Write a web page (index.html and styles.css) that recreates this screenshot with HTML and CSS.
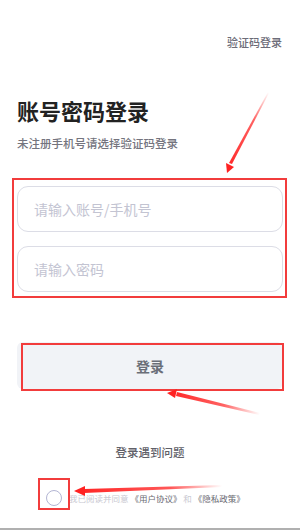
FILE: index.html
```html
<!DOCTYPE html>
<html lang="zh">
<head>
<meta charset="utf-8">
<link rel="stylesheet" href="styles.css">
</head>
<body>
<div class="page">
  <div class="topbar"><span class="switch">验证码登录</span></div>
  <h1 class="title">账号密码登录</h1>
  <p class="subtitle">未注册手机号请选择验证码登录</p>
  <div class="fields">
    <div class="field"><span class="ph">请输入账号/手机号</span></div>
    <div class="field"><span class="ph">请输入密码</span></div>
  </div>
  <div class="btn">登录</div>
  <div class="help">登录遇到问题</div>
  <div class="agree">
    <span class="check"></span>
    <span class="agree-text"><span class="light">我已阅读并同意</span> 《用户协议》 <span class="light">和</span> 《隐私政策》</span>
  </div>
  <div class="bottom-line"></div>

  <div class="mark mark-fields"></div>
  <div class="mark mark-btn"></div>
  <div class="mark mark-check"></div>
  <svg class="arrows" width="300" height="530" viewBox="0 0 300 530">
    <defs>
      <linearGradient id="g1" x1="268" y1="92" x2="228" y2="172" gradientUnits="userSpaceOnUse">
        <stop offset="0" stop-color="#ff3a3a" stop-opacity="0"/>
        <stop offset="0.35" stop-color="#ff3a3a" stop-opacity="0.8"/>
        <stop offset="1" stop-color="#f22"/>
      </linearGradient>
      <linearGradient id="g2" x1="260" y1="414" x2="168" y2="393" gradientUnits="userSpaceOnUse">
        <stop offset="0" stop-color="#ff3a3a" stop-opacity="0"/>
        <stop offset="0.4" stop-color="#ff3a3a" stop-opacity="0.8"/>
        <stop offset="1" stop-color="#f22"/>
      </linearGradient>
      <linearGradient id="g3" x1="222" y1="486" x2="75" y2="491" gradientUnits="userSpaceOnUse">
        <stop offset="0" stop-color="#ff3a3a" stop-opacity="0"/>
        <stop offset="0.35" stop-color="#ff3a3a" stop-opacity="0.85"/>
        <stop offset="1" stop-color="#f22"/>
      </linearGradient>
    </defs>
    <polygon points="268,92 269,93 232,164 229,163" fill="url(#g1)"/>
    <polygon points="227,173 226,163 234,167" fill="#f22"/>
    <polygon points="260,413 259,415 176,396 177,392" fill="url(#g2)"/>
    <polygon points="167,393 177,389 175,398" fill="#f22"/>
    <polygon points="222,485 222,487 84,493 84,489" fill="url(#g3)"/>
    <polygon points="74,491 85,486 85,496" fill="#f22"/>
  </svg>
</div>
</body>
</html>
```
FILE: styles.css
```css
* { box-sizing: border-box; }
html, body { margin: 0; padding: 0; background: #fff; }
body {
  font-family: "Noto Sans CJK SC", "Noto Sans", sans-serif;
  width: 300px;
  height: 530px;
  overflow: hidden;
}
.page {
  position: relative;
  width: 300px;
  height: 530px;
  padding: 0 17px;
  display: flex;
  flex-direction: column;
}
.topbar {
  display: flex;
  justify-content: flex-end;
  padding-top: 34px;
  padding-right: 1px;
}
.switch {
  font-size: 11px;
  line-height: 16px;
  color: #6c6c78;
  font-weight: 500;
}
.title {
  margin: 45px 0 0;
  font-size: 22px;
  line-height: 30px;
  font-weight: 700;
  color: #222;
}
.subtitle {
  margin: 10px 0 0;
  font-size: 11.5px;
  line-height: 16px;
  color: #74747e;
  font-weight: 500;
}
.fields {
  margin-top: 35px;
  display: flex;
  flex-direction: column;
  gap: 14px;
}
.field {
  height: 46px;
  border: 1px solid #dcdde6;
  border-radius: 11px;
  display: flex;
  align-items: center;
  padding-left: 16px;
}
.ph {
  font-size: 14px;
  color: #c3c4d2;
}
.btn {
  margin-top: 50px;
  height: 47px;
  background: #f1f3f7;
  border-radius: 6px;
  display: flex;
  align-items: center;
  justify-content: center;
  font-size: 14px;
  font-weight: 700;
  color: #6a6e78;
}
.help {
  margin-top: 56px;
  text-align: center;
  font-size: 11.5px;
  line-height: 14px;
  color: #606068;
  font-weight: 500;
}
.agree {
  margin-top: 31px;
  display: flex;
  align-items: center;
  padding-left: 29px;
}
.check {
  width: 16px;
  height: 16px;
  border: 1.3px solid #b3b5d3;
  border-radius: 50%;
  flex: none;
}
.agree-text {
  margin-left: 7px;
  font-size: 8.5px;
  line-height: 12px;
  color: #6a6a72;
  white-space: nowrap;
}
.light { color: #c9c9d2; }
.bottom-line {
  position: absolute;
  left: 0;
  right: 0;
  top: 528px;
  height: 2px;
  background: #b0b0b0;
}
.mark {
  position: absolute;
  border: 2px solid #f23c3c;
}
.mark-fields { left: 12px; top: 178px; width: 275px; height: 120px; }
.mark-btn { left: 21px; top: 343px; width: 263px; height: 48px; }
.mark-check { left: 38px; top: 478px; width: 32px; height: 32px; }
.arrows {
  position: absolute;
  left: 0;
  top: 0;
  pointer-events: none;
}
```
